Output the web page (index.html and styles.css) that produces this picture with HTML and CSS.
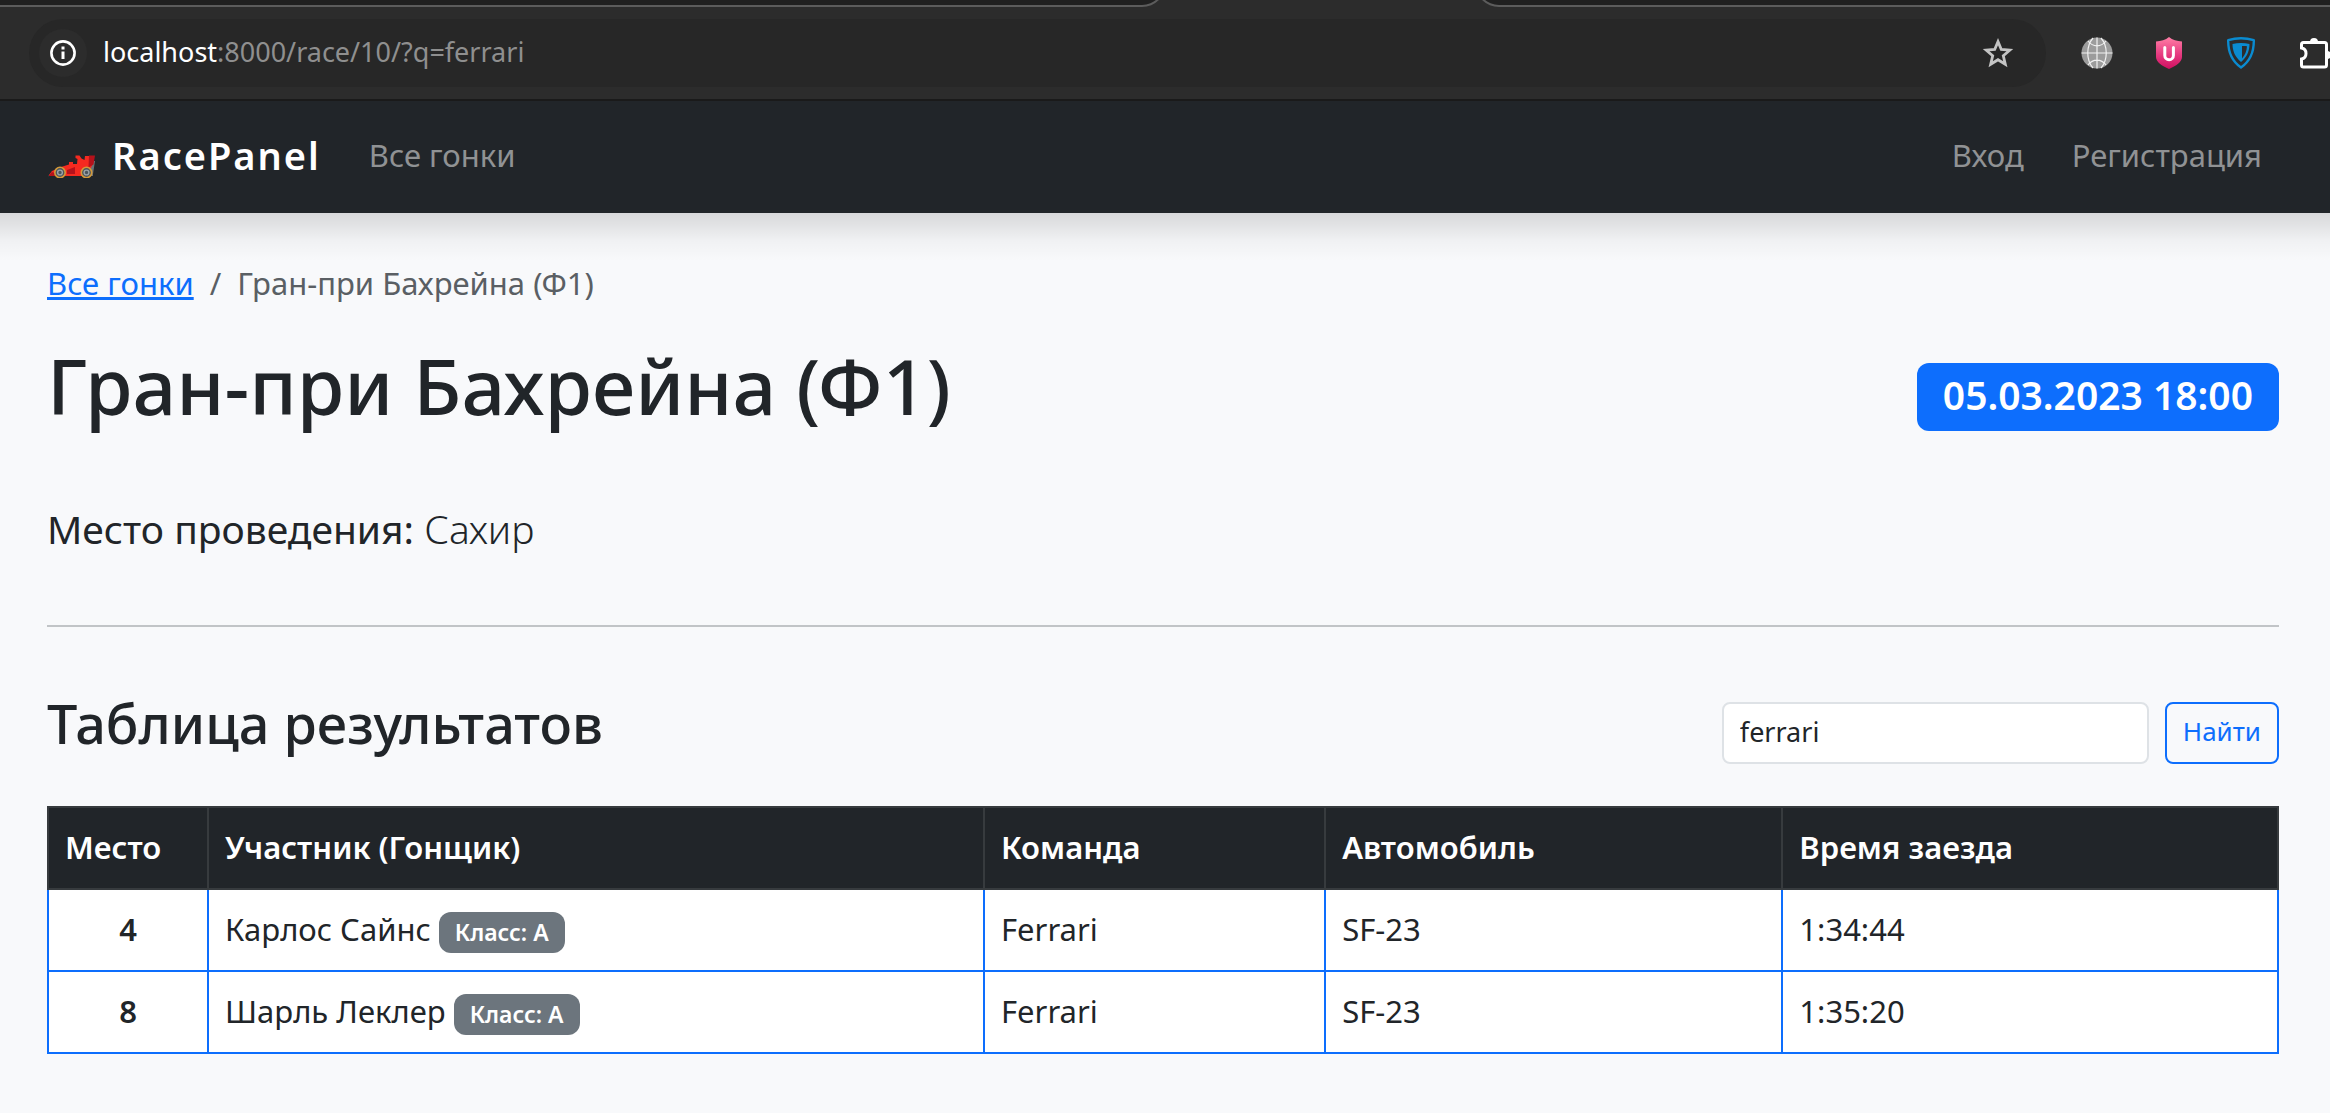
FILE: index.html
```html
<!DOCTYPE html>
<html lang="ru">
<head>
  <meta charset="utf-8">
  <meta name="viewport" content="width=device-width, initial-scale=1">
  <title>Гран-при Бахрейна (Ф1) — RacePanel</title>
  <link rel="stylesheet" href="styles.css">
</head>
<body>
  <div class="browser">
    <div class="tab-strip">
      <div class="tab tab-left"></div>
      <div class="tab-active"></div>
      <div class="tab tab-right"></div>
    </div>
    <div class="toolbar">
      <div class="omnibox">
        <button class="site-info" type="button" aria-label="Сведения о сайте">
          <svg width="28" height="28" viewBox="0 0 28 28" fill="none" stroke="#fff" stroke-width="3">
            <circle cx="14" cy="14" r="11.6" stroke-width="2.6"/>
            <path d="M14 12.6V20M14 7.6v2.8"/>
          </svg>
        </button>
        <span class="url"><span class="url-host">localhost</span>:8000/race/10/?q=ferrari</span>
        <button class="icon-button" type="button" aria-label="Добавить в закладки">
          <svg width="32" height="32" viewBox="0 0 32 32" fill="none" stroke="#c4c4c4" stroke-width="2.8">
            <path d="M16 4.600l3.300 7.900 8.500.7-6.500 5.600 2 8.400L16 22.700l-7.300 4.500 2-8.400-6.500-5.600 8.500-.7z"/>
          </svg>
        </button>
      </div>
      <div class="extensions">
        <button class="icon-button" type="button" aria-label="Прокси">
          <svg width="32" height="32" viewBox="0 0 32 32" fill="none" stroke="#f1f1f1" stroke-width="1.2">
            <circle cx="16" cy="16" r="15.5" fill="#9c9c9c" stroke="none"/>
            <path d="M16 .5v31M.5 16h31M7 4c5 6.500 13 6.500 18 0M7 28c5-6.500 13-6.500 18 0M12 1C5 9 5 23 12 31M20 1c7 8 7 22 0 30"/>
          </svg>
        </button>
        <button class="icon-button" type="button" aria-label="Блокировщик">
          <svg width="32" height="32" viewBox="0 0 32 32">
            <defs>
              <linearGradient id="shield" x1="0" y1="0" x2="0" y2="1">
                <stop offset="0" stop-color="#ff7fa6"/>
                <stop offset=".55" stop-color="#e63a80"/>
                <stop offset="1" stop-color="#cf0f60"/>
              </linearGradient>
            </defs>
            <path d="M16 0c3.500 3 8 4 13 4.500V20c0 5-6 9-13 12C9 29 3 25 3 20V4.500C8 4 12.500 3 16 0z" fill="url(#shield)"/>
            <path d="M11.800 10.500v8a4.300 4.300 0 0 0 8.600 0v-8" fill="none" stroke="#fff" stroke-width="3" stroke-linecap="round"/>
          </svg>
        </button>
        <button class="icon-button" type="button" aria-label="VPN">
          <svg width="32" height="32" viewBox="0 0 32 32">
            <path d="M3.200 3.200C11 .8 21 .8 28.800 3.200 29 15 24 25 16 30.500 8 25 3 15 3.200 3.200z" fill="none" stroke="#0a8bd0" stroke-width="2.400" stroke-linejoin="round"/>
            <path d="M7.500 7c5.500-1.300 11.500-1.300 17 0 0 7.500-3 13.500-8.500 18C10.500 20.500 7.500 14.500 7.500 7z" fill="#0a8bd0"/>
            <path d="M17 9c2-.1 3.500 0 5 .3-.3 4.700-2 9-5 12.200z" fill="#2c2c2c"/>
          </svg>
        </button>
        <button class="icon-button" type="button" aria-label="Расширения">
          <svg width="40" height="32" viewBox="0 0 40 32">
            <path d="M6.500 5.500h21q2 0 2 2v20.500q0 2-2 2h-21q-2 0-2-2v-6c6-1 6-10 0-11v-3.500q0-2 2-2z" fill="none" stroke="#fff" stroke-width="3"/>
            <path d="M13 5a4 4 0 0 1 8 0zM30 14a4 4 0 0 1 0 8z" fill="#fff"/>
          </svg>
        </button>
      </div>
    </div>
  </div>

  <nav class="navbar">
    <a class="brand" href="#">
      <svg width="48" height="32" viewBox="0 0 48 32" aria-hidden="true">
        <path d="M0 30.500l4-5h6l9 0 10 .5 10-11 8 0-2 13v2H0z" fill="#6d7274"/>
        <path d="M1 29l3-4 9-4 8-2.500V16h4v2h4l.5-5-2-1v-2.500h4l2 3 3 1.500.5-4h9l-1.500 8.500L42 24l-8 6H18l-8-1-4 1z" fill="#f52a20"/>
        <path d="M41 9.500h6l-1.500 9-5 3zM1 29l3-3 3 1v3H1zM19 24l8-3v7l-8 0z" fill="#b5121b"/>
        <g stroke="#d39a3a" stroke-width="1.600" fill="#4c555b">
          <circle cx="12" cy="26.500" r="5.200"/>
          <circle cx="38.500" cy="26.500" r="5.200"/>
        </g>
        <g fill="none" stroke="#9ba3a7" stroke-width="1.400">
          <circle cx="12" cy="26.500" r="2.400"/>
          <circle cx="38.500" cy="26.500" r="2.400"/>
        </g>
      </svg>
      <span>RacePanel</span>
    </a>
    <a class="nav-link" href="#">Все гонки</a>
    <div class="nav-user">
      <a class="nav-link" href="#">Вход</a>
      <a class="nav-link" href="#">Регистрация</a>
    </div>
  </nav>

  <main class="page">
    <ol class="breadcrumb">
      <li><a href="#">Все гонки</a></li>
      <li class="separator" aria-hidden="true">/</li>
      <li>Гран-при Бахрейна (Ф1)</li>
    </ol>

    <header class="race-header">
      <h1>Гран-при Бахрейна (Ф1)</h1>
      <span class="badge badge-date">05.03.2023 18:00</span>
    </header>

    <p class="lead"><strong>Место проведения:</strong> Сахир</p>

    <hr class="divider">

    <section>
      <div class="results-header">
        <h2>Таблица результатов</h2>
        <form class="search">
          <input type="text" name="q" value="ferrari" aria-label="Поиск">
          <button type="button">Найти</button>
        </form>
      </div>

      <table class="results">
        <colgroup>
          <col class="col-place"><col class="col-driver"><col class="col-team"><col class="col-car"><col class="col-time">
        </colgroup>
        <thead>
          <tr><th>Место</th><th>Участник (Гонщик)</th><th>Команда</th><th>Автомобиль</th><th>Время заезда</th></tr>
        </thead>
        <tbody>
          <tr>
            <td class="place">4</td>
            <td>Карлос Сайнс <span class="badge badge-class">Класс: A</span></td>
            <td>Ferrari</td><td>SF-23</td><td>1:34:44</td>
          </tr>
          <tr>
            <td class="place">8</td>
            <td>Шарль Леклер <span class="badge badge-class">Класс: A</span></td>
            <td>Ferrari</td><td>SF-23</td><td>1:35:20</td>
          </tr>
        </tbody>
      </table>
    </section>
  </main>
</body>
</html>
```
FILE: styles.css
```css
* {
  box-sizing: border-box;
}

body {
  margin: 0;
  min-height: 100vh;
  overflow-x: hidden;
  background: #f8f9fb;
  color: #212529;
  font: 400 31px/48px "Noto Sans", "Open Sans", sans-serif;
}

a {
  color: #0d6efd;
}

svg {
  display: block;
  flex: none;
}

/* Browser chrome */
.browser {
  background: #2c2c2c;
  border-bottom: 2px solid #1a1a1a;
}

.tab-strip {
  display: flex;
  align-items: flex-end;
  height: 7px;
  overflow: hidden;
}

.tab {
  height: 48px;
  background: #202020;
  border-bottom: 2px solid #5c5c5c;
}

.tab-left {
  flex: 1166;
  border-right: 2px solid #5c5c5c;
  border-bottom-right-radius: 24px;
}

.tab-active {
  flex: 310;
}

.tab-right {
  flex: 854;
  border-left: 2px solid #5c5c5c;
  border-bottom-left-radius: 24px;
}

.toolbar {
  display: flex;
  align-items: center;
  gap: 35px;
  padding: 12px 1px 12px 29px;
}

.omnibox {
  display: flex;
  flex: 1;
  align-items: center;
  gap: 16px;
  padding: 10px 32px 10px 10px;
  border-radius: 34px;
  background: #272727;
}

.site-info,
.icon-button {
  display: flex;
  align-items: center;
  justify-content: center;
  padding: 0;
  border: 0;
  background: none;
}

.site-info {
  width: 48px;
  height: 48px;
  border-radius: 50%;
  background: #2c2c2c;
}

.icon-button {
  width: 32px;
  height: 32px;
}

.url {
  flex: 1;
  color: #8f8f8f;
  font-size: 27px;
  line-height: 46px;
  padding-bottom: 2px;
}

.url-host {
  color: #fff;
}

.extensions {
  display: flex;
  gap: 40px;
}

.icon-button:last-child {
  justify-content: flex-start;
}

/* Site navigation */
.navbar {
  display: flex;
  align-items: center;
  gap: 48px;
  padding: 24px 68px 28px 48px;
  background: #212529;
  line-height: 60px;
}

.brand {
  display: flex;
  align-items: center;
  gap: 16px;
  color: #fff;
  font-size: 38px;
  font-weight: 600;
  letter-spacing: 2px;
  text-decoration: none;
}

.brand svg {
  margin-top: 14px;
}

.nav-link {
  color: #909294;
  text-decoration: none;
}

.nav-user {
  display: flex;
  gap: 48px;
  margin-left: auto;
}

/* Page content, with the shadow of the navigation bar at its top */
.page {
  padding: 46px 51px 48px 47px;
  background: linear-gradient(
    rgba(0, 0, 0, 0.13),
    rgba(0, 0, 0, 0.09) 12px,
    rgba(0, 0, 0, 0.03) 28px,
    transparent 48px
  );
}

.breadcrumb {
  display: flex;
  gap: 16px;
  margin: 0 0 32px;
  padding: 0;
  color: #5a5f64;
  list-style: none;
}

.race-header {
  display: flex;
  align-items: center;
  justify-content: space-between;
  margin-bottom: 66px;
}

h1,
h2 {
  margin: 0;
  font-weight: 500;
}

h1 {
  font-size: 77px;
  line-height: 94px;
}

h2 {
  font-size: 54px;
  line-height: 64px;
}

.badge {
  display: inline-block;
  border-radius: 12px;
  color: #fff;
  font-weight: 600;
}

.badge-date {
  margin-top: 22px;
  padding: 10px 26px 14px;
  background: #0d6efd;
  font-size: 39px;
  line-height: 44px;
}

.badge-class {
  padding: 8px 16px;
  background: #6c757d;
  font-size: 23px;
  line-height: 25px;
  vertical-align: middle;
}

.lead {
  margin: 0;
  font-size: 39px;
  font-weight: 300;
  line-height: 60px;
}

.lead strong {
  font-weight: 400;
}

.divider {
  margin: 66px 0 64px;
  border: 0;
  border-top: 2px solid #c1c4c7;
}

.results-header {
  display: flex;
  align-items: flex-start;
  justify-content: space-between;
  margin-bottom: 42px;
}

.search {
  display: flex;
  gap: 16px;
  margin-top: 11px;
}

.search input,
.search button {
  height: 62px;
  padding: 6px 16px 10px;
  border: 2px solid #dee2e6;
  border-radius: 8px;
  font: inherit;
  font-size: 27px;
  line-height: 42px;
}

.search input {
  width: 427px;
  background: #fff;
  color: #212529;
}

.search button {
  border-color: #0d6efd;
  background: transparent;
  color: #0d6efd;
  font-size: 26px;
}

.results {
  width: 100%;
  border-collapse: collapse;
  table-layout: fixed;
  background: #fff;
}

.col-place { width: 160px; }
.col-driver { width: 34.8%; }
.col-team { width: 15.3%; }
.col-car { width: 20.5%; }

.results th,
.results td {
  height: 82px;
  padding: 15px 16px 17px;
  border: 2px solid #0d6efd;
  text-align: left;
}

.results th {
  border-color: #373b3e;
  background: #212529;
  color: #fff;
  font-weight: 600;
}

.results .place {
  font-weight: 600;
  text-align: center;
}
```
